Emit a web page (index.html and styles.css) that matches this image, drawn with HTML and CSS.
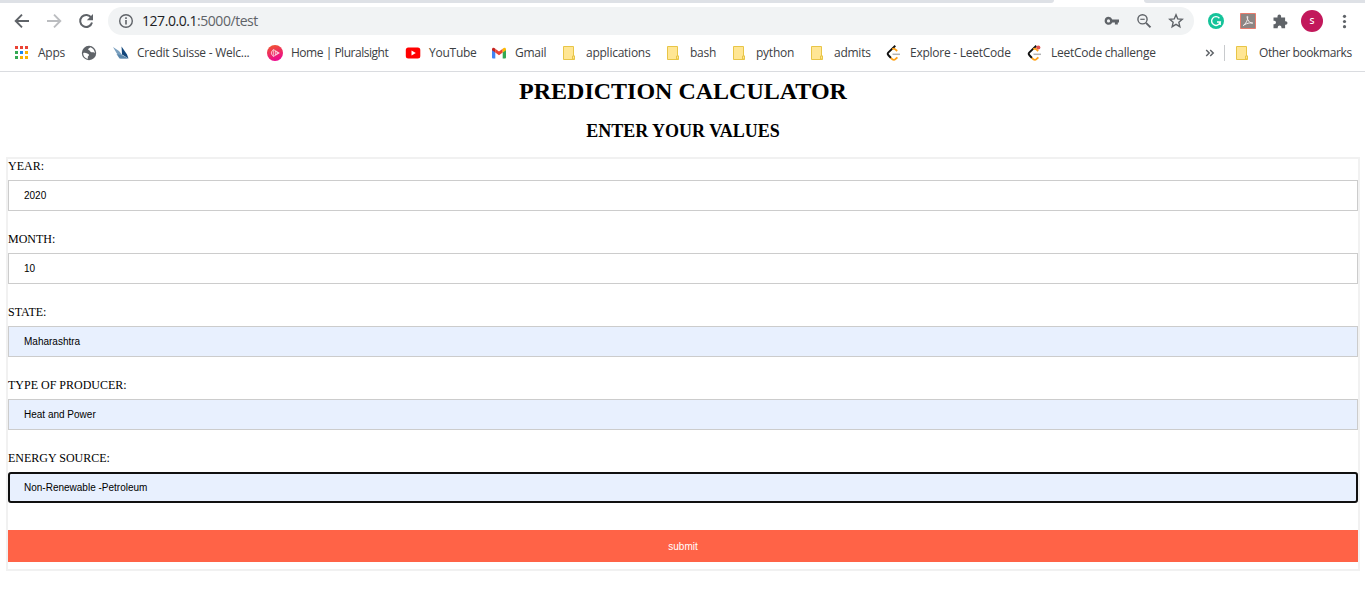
FILE: index.html
```html
<!DOCTYPE html>
<html lang="en">
<head>
<meta charset="utf-8">
<title>Prediction Calculator</title>
<link rel="stylesheet" href="styles.css">
</head>
<body>
<svg width="0" height="0" class="defs">
  <defs>
    <linearGradient id="plural" x1="0" y1="0" x2="0.3" y2="1"><stop offset="0" stop-color="#f05a28"/><stop offset="1" stop-color="#ec0b8c"/></linearGradient>
    <symbol id="folder" viewBox="0 0 16 16"><path d="M1.500 1.500h10v9.500h1v3.500h-11z" fill="#ffe694" stroke="#e8c547"/><path d="M10.500 14v-3h2v3z" fill="#ffe694" stroke="#e8c547"/></symbol>
    <symbol id="leet" viewBox="0 0 16 16"><path d="M9.300.8L2.200 7.600Q1.200 8.800 2.200 10l2.800 3" fill="none" stroke="#111" stroke-width="1.900"/><path d="M6.300 4.200q1.700-1.200 3 .1l1.900 1.700M4.800 12.900q2.700 3 4.600 1.300l2-1.900" fill="none" stroke="#ffa116" stroke-width="1.800"/><path d="M6.500 9.300h7.500" stroke="#b3b3b3" stroke-width="1.500"/></symbol>
  </defs>
</svg>
<header class="browser">
  <div class="tabstrip"><i class="tab-left"></i><i class="tab-right"></i></div>
  <div class="toolbar">
    <svg class="nav" viewBox="0 0 16 16"><path d="M15 8H2M8 1.700L1.700 8 8 14.300" fill="none" stroke="#5f6368" stroke-width="1.900"/></svg>
    <svg class="nav" viewBox="0 0 16 16"><path d="M1 8h13M8 1.700L14.300 8 8 14.300" fill="none" stroke="#bbbdc0" stroke-width="1.900"/></svg>
    <svg class="nav" viewBox="0 0 16 16"><path d="M13.300 4.800A6 6 0 1 0 14 9.500" fill="none" stroke="#5f6368" stroke-width="2"/><path d="M15 1v6.200H8.800z" fill="#5f6368"/></svg>
    <div class="omnibox">
      <svg class="info" viewBox="0 0 16 16"><circle cx="8" cy="8" r="6.300" fill="none" stroke="#5f6368" stroke-width="1.400"/><path d="M8 7v4.500M8 4.300v1.600" stroke="#5f6368" stroke-width="1.600"/></svg>
      <span class="url">127.0.0.1<span class="path">:5000/test</span></span>
      <svg class="key" viewBox="0 0 16 16"><path fill-rule="evenodd" d="M4.500 3.800a4 4 0 0 1 3.800 2.600H15v3h-1.200v2.200h-2.900V9.400H8.300a4 4 0 1 1-3.800-5.600zm0 2.500a1.600 1.600 0 1 0 0 3.200 1.600 1.600 0 0 0 0-3.200z" fill="#5f6368"/></svg>
      <svg class="lens" viewBox="0 0 16 16"><circle cx="6.500" cy="6.300" r="4.600" fill="none" stroke="#5f6368" stroke-width="1.400"/><path d="M10 9.800l4.500 4.500" stroke="#5f6368" stroke-width="1.900"/><path d="M4.300 6.300h4.400" stroke="#5f6368" stroke-width="1.200"/></svg>
      <svg class="star" viewBox="0 0 16 16"><path d="M8 1.800l1.750 4.150 4.500.4-3.400 2.950 1 4.400L8 11.400l-3.850 2.300 1-4.400-3.400-2.950 4.500-.4z" fill="none" stroke="#5f6368" stroke-width="1.400"/></svg>
    </div>
    <div class="extensions">
      <svg viewBox="0 0 16 16"><circle cx="8" cy="8" r="8" fill="#15c39a"/><path d="M11.400 5.200A4.400 4.400 0 1 0 12.300 9H9M12.200 8.600v3.400" fill="none" stroke="#fff" stroke-width="1.400"/></svg>
      <svg viewBox="0 0 16 16"><path d="M.5.500h15v15H.5z" fill="#8c8583" stroke="#e77b6c"/><path d="M3.200 12.600c2.600-1.600 4.700-5.500 4.600-8.800-.4-1.600-1.300 0-.1 2.600 1.200 2.600 2.900 3.900 5 3.800 1-.5-5-1.100-9.500 2.400z" fill="none" stroke="#f3eeee" stroke-width="1"/></svg>
      <svg viewBox="0 0 16 16"><path d="M1.500 4.500h4V3.300a1.800 1.800 0 0 1 3.600 0v1.200h4v3.700h.6a1.800 1.800 0 0 1 0 3.600h-.6v3.400H9.500v-.8a1.900 1.900 0 0 0-3.800 0v.8H1.500v-4h.8a1.700 1.700 0 0 0 0-3.400h-.8z" fill="#5f6368"/></svg>
      <span class="avatar">S</span>
      <svg viewBox="0 0 16 16"><g fill="#5f6368"><circle cx="8.500" cy="3.300" r="1.600"/><circle cx="8.500" cy="8.500" r="1.600"/><circle cx="8.500" cy="13.700" r="1.600"/></g></svg>
    </div>
  </div>
  <nav class="bookmarks">
    <a><svg viewBox="0 0 16 16"><path d="M1 1h3v3H1zM6 1h3v3H6zM11 1h3v3h-3z" fill="#ea4335"/><path d="M1 6h3v3H1zM1 11h3v3H1z" fill="#34a853"/><path d="M6 6h3v3H6z" fill="#1a87f0"/><path d="M11 6h3v3h-3zM6 11h3v3H6zM11 11h3v3h-3z" fill="#fbb300"/></svg><span>Apps</span></a>
    <a><svg viewBox="0 0 16 16"><circle cx="8" cy="8" r="7.200" fill="#5f6368"/><path d="M2.200 8c2-1 4 .2 5.500 1.300.8 1-.2 1.700-.8 2.300L6.700 14C3.700 13 2 10.700 2.200 8zM9.500 2.300c-.8 1-2.300 1-2.300 2.200 0 1 1.800.6 2 1.800.2 1 1 1.300 2.300.9 1.200-.3 1.600.4 2.300 1 0-2.800-1.700-5-4.300-5.900z" fill="#fff"/></svg></a>
    <a><svg viewBox="0 0 16 16"><path d="M0 2l6 4 4 5 5 2.500H7.500L3.500 8z" fill="#7ba0bf"/><path d="M8.500 1.500l5.500 8 1.500 4L9 9.500z" fill="#11467b"/><path d="M3.500 9l6 1.500 6 3H6.500z" fill="#5986ab"/></svg><span>Credit Suisse - Welc...</span></a>
    <a class="tight"><svg viewBox="0 0 16 16"><circle cx="8" cy="8" r="8" fill="url(#plural)"/><path d="M6.300 4.500l6 3.500-6 3.500zM6 5.300a3 3 0 0 0 0 5.400M8.300 6.300l2.800 1.700-2.800 1.700z" fill="none" stroke="#fff" stroke-width=".8" stroke-opacity=".85"/></svg><span>Home | Pluralsight</span></a>
    <a><svg viewBox="0 0 16 16"><rect x=".8" y="2.500" width="14.500" height="11" rx="2.500" fill="#f00"/><path d="M6.500 5.500v5L10.800 8z" fill="#fff"/></svg><span>YouTube</span></a>
    <a><svg viewBox="0 0 16 16"><path d="M1 4.500l3.300 2.400v6.600H2q-1 0-1-1z" fill="#4285f4"/><path d="M15 4.500l-3.300 2.400v6.600H14q1 0 1-1z" fill="#34a853"/><path d="M4.300 3.800L8 6.600l3.700-2.800v3.800L8 10.300 4.300 7.600z" fill="#ea4335"/><path d="M1 4.500C1 2.500 3 2.400 4.300 3.800v3.800L1 5.200z" fill="#c5221f"/><path d="M15 4.500c0-2-2-2.100-3.300-.7v3.800L15 5.200z" fill="#fbbc04"/></svg><span>Gmail</span></a>
    <a><svg><use href="#folder"/></svg><span>applications</span></a>
    <a><svg><use href="#folder"/></svg><span>bash</span></a>
    <a><svg><use href="#folder"/></svg><span>python</span></a>
    <a><svg><use href="#folder"/></svg><span>admits</span></a>
    <a><svg><use href="#leet"/></svg><span>Explore - LeetCode</span></a>
    <a><svg viewBox="0 0 16 16"><use href="#leet"/><circle cx="11.300" cy="2.500" r="2.100" fill="#e2504c"/></svg><span>LeetCode challenge</span></a>
    <svg class="more" viewBox="0 0 10 16"><path d="M1.200 5l3 3-3 3M5.200 5l3 3-3 3" fill="none" stroke="#5f6368" stroke-width="1.500"/></svg>
    <a class="other"><svg><use href="#folder"/></svg><span>Other bookmarks</span></a>
  </nav>
</header>
<main>
  <h1>PREDICTION CALCULATOR</h1>
  <h2>ENTER YOUR VALUES</h2>
  <form>
    <label>YEAR:<input type="text" value="2020"></label>
    <label>MONTH:<input type="text" value="10"></label>
    <label>STATE:<input class="autofill" type="text" value="Maharashtra"></label>
    <label>TYPE OF PRODUCER:<input class="autofill" type="text" value="Heat and Power"></label>
    <label>ENERGY SOURCE:<input class="autofill focused" type="text" value="Non-Renewable -Petroleum"></label>
    <button type="button">submit</button>
  </form>
</main>
</body>
</html>
```
FILE: styles.css
```css
* { box-sizing: border-box; }
body { margin: 0; background: #fff; color: #000; font-family: "Liberation Serif", serif; overflow: hidden; }
.defs { position: absolute; }

.browser { height: 72px; border-bottom: 1px solid #dadce0; font-family: "Open Sans", "Noto Sans", sans-serif; }
.tabstrip { height: 3px; display: flex; justify-content: space-between; }
.tabstrip i { background: #dee1e6; height: 3px; }
.tab-left { width: 1054px; border-bottom-right-radius: 4px; }
.tab-right { width: 221px; border-bottom-left-radius: 4px; }

.toolbar { height: 36px; display: flex; align-items: center; padding-left: 14px; }
.nav { width: 16px; height: 16px; margin-right: 16px; }
.omnibox { width: 1086px; height: 28px; margin-left: -2px; border-radius: 14px; background: #f1f3f4; display: flex; align-items: center; padding: 0 10px; }
.omnibox svg { width: 16px; height: 16px; flex: none; }
.url { font-size: 14px; line-height: 28px; letter-spacing: -0.45px; margin-left: 8px; color: #202124; flex: 1; white-space: nowrap; }
.path { color: #5f6368; }
.omnibox .lens, .omnibox .star { margin-left: 16px; }
.extensions { display: flex; align-items: center; gap: 16px; margin-left: 14px; }
.extensions svg { width: 16px; height: 16px; }
.avatar { width: 22px; height: 22px; margin: 0 -3px; border-radius: 50%; background: #c2185b; color: #fff; font-size: 9px; font-weight: 600; line-height: 22px; text-align: center; }

.bookmarks { height: 28px; padding-left: 14px; display: grid; grid-template-columns: 67px 32px 154px 138px 86px 71px 104px 66px 78px 76px 141px 178px 19px 141px; align-items: center; }
.bookmarks a { display: flex; align-items: center; gap: 8px; color: #3c4043; font-size: 12px; line-height: 16px; letter-spacing: -0.25px; white-space: nowrap; }
.bookmarks .tight { letter-spacing: -0.48px; }
.bookmarks a svg { width: 16px; height: 16px; flex: none; }
.bookmarks .more { width: 10px; height: 16px; }
.bookmarks .other { border-left: 1px solid #c8cacd; padding-left: 10px; letter-spacing: -0.38px; }

main { padding: 0 5px 0 6px; }
h1, h2 { margin: 0; text-align: center; font-weight: bold; }
h1 { font-size: 24px; line-height: 28px; padding-top: 5px; }
h2 { font-size: 18px; line-height: 20px; padding-top: 16px; }
form { margin-top: 16px; height: 414px; border: 2px solid #f1f1f1; }
label { display: block; height: 73px; font-size: 12px; line-height: 14px; }
input { display: block; width: 100%; height: 31px; margin-top: 7px; padding: 0 15px; border: 1px solid #ccc; border-radius: 0; background: #fff; color: #000; font: 10px "Liberation Sans", Arial, sans-serif; outline: 0; }
.autofill { background: #e8f0fe; }
.focused { border: 2px solid #101010; border-radius: 3px; padding: 0 14px; }
button { display: block; width: 100%; height: 32px; margin-top: 6px; padding: 0; border: 0; background: #ff6347; color: #fff; font: 10px "Liberation Sans", Arial, sans-serif; }
```
